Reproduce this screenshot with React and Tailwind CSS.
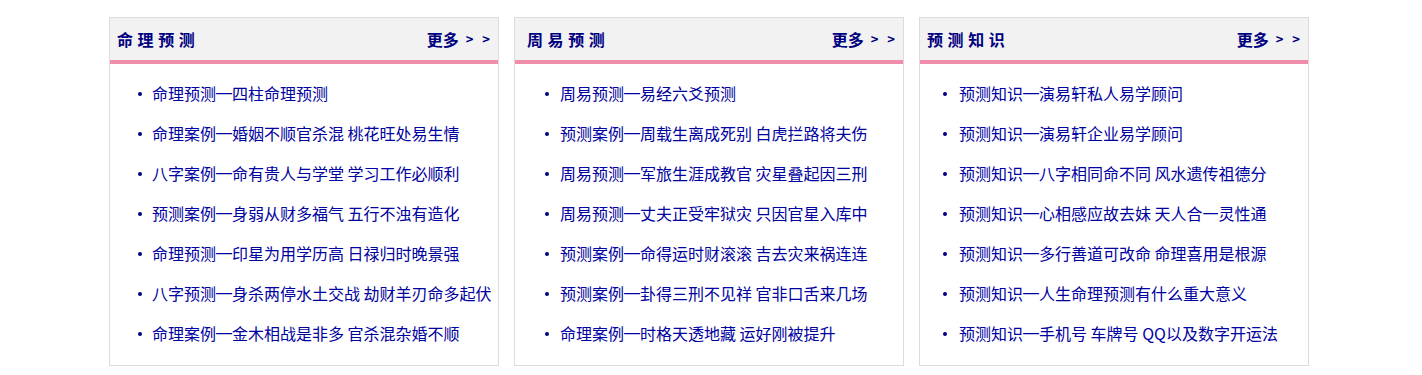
import React from 'react';

const PANELS = [
  {
    title: '命理预测',
    titlePad: 'pl-[7px]',
    listPad: 'pl-[28px]',
    dotGap: 'mr-[10px]',
    items: [
      '命理预测—四柱命理预测',
      '命理案例—婚姻不顺官杀混 桃花旺处易生情',
      '八字案例—命有贵人与学堂 学习工作必顺利',
      '预测案例—身弱从财多福气 五行不浊有造化',
      '命理预测—印星为用学历高 日禄归时晚景强',
      '八字预测—身杀两停水土交战 劫财羊刃命多起伏',
      '命理案例—金木相战是非多 官杀混杂婚不顺',
    ],
  },
  {
    title: '周易预测',
    titlePad: 'pl-[12px]',
    listPad: 'pl-[30px]',
    dotGap: 'mr-[11px]',
    items: [
      '周易预测—易经六爻预测',
      '预测案例—周载生离成死别 白虎拦路将夫伤',
      '周易预测—军旅生涯成教官 灾星叠起因三刑',
      '周易预测—丈夫正受牢狱灾 只因官星入库中',
      '预测案例—命得运时财滚滚 吉去灾来祸连连',
      '预测案例—卦得三刑不见祥 官非口舌来几场',
      '命理案例—时格天透地藏 运好刚被提升',
    ],
  },
  {
    title: '预测知识',
    titlePad: 'pl-[7px]',
    listPad: 'pl-[23px]',
    dotGap: 'mr-[12px]',
    items: [
      '预测知识—演易轩私人易学顾问',
      '预测知识—演易轩企业易学顾问',
      '预测知识—八字相同命不同 风水遗传祖德分',
      '预测知识—心相感应故去妹 天人合一灵性通',
      '预测知识—多行善道可改命 命理喜用是根源',
      '预测知识—人生命理预测有什么重大意义',
      '预测知识—手机号 车牌号 QQ以及数字开运法',
    ],
  },
];

const font = { fontFamily: '"Microsoft YaHei", "Noto Sans CJK SC", "Noto Sans", sans-serif' };

// Noto CJK draws the em dash short; Liberation's is a full em wide like the original
function ItemText({ text }) {
  const [head, tail] = text.split('—');
  return (
    <>
      {head}
      <span className="relative top-[-2px] font-['Liberation_Sans']">—</span>
      {tail}
    </>
  );
}

function Panel({ title, items, titlePad, listPad, dotGap }) {
  return (
    <div className="w-[390px] border border-[#dcdcdc] bg-white">
      <div className={`flex h-[42px] items-center justify-between bg-[#f2f2f2] pr-[8px] ${titlePad}`}>
        <span className="text-[16px] font-bold tracking-[4.6px] text-[#000080]">{title}</span>
        <a href="#" className="flex items-center text-[16px] font-bold text-[#000080]">
          更多
          <span className="ml-[7px] text-[13px]">&gt;</span>
          <span className="ml-[9px] text-[13px]">&gt;</span>
        </a>
      </div>
      <div className="h-[4px] bg-[#f08dab]" />
      <ul className="pt-[10px] pb-[11px]">
        {items.map((t) => (
          <li key={t} className={`flex h-[40px] items-center ${listPad}`}>
            <span className={`h-[4px] w-[4px] shrink-0 rounded-full bg-[#000080] ${dotGap}`} />
            <a href="#" className="whitespace-nowrap text-[16px] text-[#0000a0]">
              <ItemText text={t} />
            </a>
          </li>
        ))}
      </ul>
    </div>
  );
}

export default function App() {
  return (
    <div className="min-h-[375px] bg-white pt-[17px]" style={font}>
      <div className="ml-[109px] flex gap-[15px]">
        {PANELS.map((p) => (
          <Panel key={p.title} {...p} />
        ))}
      </div>
    </div>
  );
}
